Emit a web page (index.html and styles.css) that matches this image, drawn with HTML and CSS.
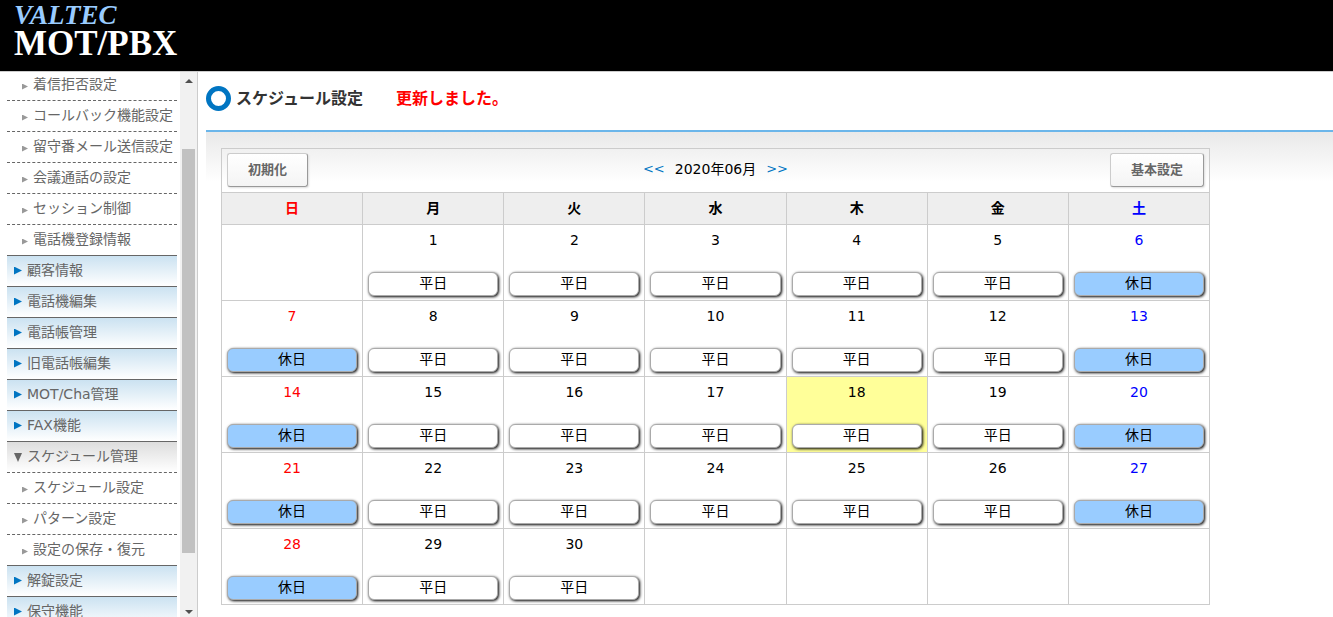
FILE: index.html
```html
<!DOCTYPE html>
<html lang="ja">
<head>
<meta charset="utf-8">
<title>MOT/PBX スケジュール設定</title>
<link rel="stylesheet" href="styles.css">
</head>
<body>
<header class="header">
  <div class="brand">VALTEC</div>
  <div class="product">MOT/PBX</div>
</header>
<div class="body">
  <aside class="sidebar">
    <nav class="nav">
      <ul class="menu">
        <li class="sub"><a href="#">着信拒否設定</a></li>
        <li class="sub"><a href="#">コールバック機能設定</a></li>
        <li class="sub"><a href="#">留守番メール送信設定</a></li>
        <li class="sub"><a href="#">会議通話の設定</a></li>
        <li class="sub"><a href="#">セッション制御</a></li>
        <li class="sub"><a href="#">電話機登録情報</a></li>
        <li class="top"><a href="#">顧客情報</a></li>
        <li class="top"><a href="#">電話機編集</a></li>
        <li class="top"><a href="#">電話帳管理</a></li>
        <li class="top"><a href="#">旧電話帳編集</a></li>
        <li class="top"><a href="#">MOT/Cha管理</a></li>
        <li class="top"><a href="#">FAX機能</a></li>
        <li class="top open"><a href="#">スケジュール管理</a></li>
        <li class="sub"><a href="#">スケジュール設定</a></li>
        <li class="sub"><a href="#">パターン設定</a></li>
        <li class="sub"><a href="#">設定の保存・復元</a></li>
        <li class="top"><a href="#">解錠設定</a></li>
        <li class="top"><a href="#">保守機能</a></li>
      </ul>
    </nav>
    <div class="scrollbar" aria-hidden="true">
      <svg class="scroll-arrow" viewBox="0 0 17 17"><path d="M5 11h8L9 7z"/></svg>
      <div class="scroll-track"><div class="scroll-thumb"></div></div>
      <svg class="scroll-arrow" viewBox="0 0 17 17"><path d="M5 10h8l-4 4z"/></svg>
    </div>
  </aside>
  <main class="main">
    <div class="heading">
      <span class="ring"></span>
      <h1>スケジュール設定</h1>
      <p class="message">更新しました。</p>
    </div>
    <div class="panel">
      <table class="calendar">
        <thead>
          <tr>
            <td class="toolbar-cell" colspan="7">
              <div class="toolbar">
                <button type="button" class="tool">初期化</button>
                <div class="month"><a href="#">&lt;&lt;</a><span>2020年06月</span><a href="#">&gt;&gt;</a></div>
                <button type="button" class="tool end">基本設定</button>
              </div>
            </td>
          </tr>
          <tr><th class="sun">日</th><th>月</th><th>火</th><th>水</th><th>木</th><th>金</th><th class="sat">土</th></tr>
        </thead>
        <tbody>
          <tr>
            <td></td>
            <td><div class="date">1</div><button type="button" class="day">平日</button></td>
            <td><div class="date">2</div><button type="button" class="day">平日</button></td>
            <td><div class="date">3</div><button type="button" class="day">平日</button></td>
            <td><div class="date">4</div><button type="button" class="day">平日</button></td>
            <td><div class="date">5</div><button type="button" class="day">平日</button></td>
            <td class="sat"><div class="date">6</div><button type="button" class="day off">休日</button></td>
          </tr>
          <tr>
            <td class="sun"><div class="date">7</div><button type="button" class="day off">休日</button></td>
            <td><div class="date">8</div><button type="button" class="day">平日</button></td>
            <td><div class="date">9</div><button type="button" class="day">平日</button></td>
            <td><div class="date">10</div><button type="button" class="day">平日</button></td>
            <td><div class="date">11</div><button type="button" class="day">平日</button></td>
            <td><div class="date">12</div><button type="button" class="day">平日</button></td>
            <td class="sat"><div class="date">13</div><button type="button" class="day off">休日</button></td>
          </tr>
          <tr>
            <td class="sun"><div class="date">14</div><button type="button" class="day off">休日</button></td>
            <td><div class="date">15</div><button type="button" class="day">平日</button></td>
            <td><div class="date">16</div><button type="button" class="day">平日</button></td>
            <td><div class="date">17</div><button type="button" class="day">平日</button></td>
            <td class="today"><div class="date">18</div><button type="button" class="day">平日</button></td>
            <td><div class="date">19</div><button type="button" class="day">平日</button></td>
            <td class="sat"><div class="date">20</div><button type="button" class="day off">休日</button></td>
          </tr>
          <tr>
            <td class="sun"><div class="date">21</div><button type="button" class="day off">休日</button></td>
            <td><div class="date">22</div><button type="button" class="day">平日</button></td>
            <td><div class="date">23</div><button type="button" class="day">平日</button></td>
            <td><div class="date">24</div><button type="button" class="day">平日</button></td>
            <td><div class="date">25</div><button type="button" class="day">平日</button></td>
            <td><div class="date">26</div><button type="button" class="day">平日</button></td>
            <td class="sat"><div class="date">27</div><button type="button" class="day off">休日</button></td>
          </tr>
          <tr>
            <td class="sun"><div class="date">28</div><button type="button" class="day off">休日</button></td>
            <td><div class="date">29</div><button type="button" class="day">平日</button></td>
            <td><div class="date">30</div><button type="button" class="day">平日</button></td>
            <td></td>
            <td></td>
            <td></td>
            <td></td>
          </tr>
        </tbody>
      </table>
    </div>
  </main>
</div>
</body>
</html>
```

FILE: styles.css
```css
* { box-sizing: border-box; }

body {
  margin: 0;
  height: 100vh;
  display: flex;
  flex-direction: column;
  overflow: hidden;
  background: #fff;
  color: #000;
  font: 14px/20px "DejaVu Sans", "Noto Sans CJK JP", sans-serif;
}

button { font-family: inherit; cursor: pointer; }
a { text-decoration: none; }

.header {
  flex: none;
  padding: 3px 14px 11px;
  background: #000;
  border-bottom: 1px solid #ccc;
  font-family: "Liberation Serif", serif;
  font-weight: bold;
}
.brand {
  color: #9cf;
  font-size: 27px;
  line-height: 25px;
  font-style: italic;
}
.product {
  color: #fff;
  font-size: 35px;
  line-height: 32px;
}

.body {
  flex: 1;
  min-height: 0;
  display: flex;
}

.sidebar {
  flex: none;
  width: 198px;
  display: flex;
  border-right: 1px solid #ccc;
  overflow: hidden;
}
.nav {
  flex: 1;
  padding: 0 3px 0 7px;
  overflow: hidden;
}
.menu {
  margin: -3px 0 0;
  padding: 0;
  list-style: none;
}
.menu a {
  display: flex;
  align-items: center;
  height: 30px;
  padding-bottom: 2px;
  color: #666;
  white-space: nowrap;
}
.menu a::before {
  content: "";
  flex: none;
  background: #0075c2;
  clip-path: polygon(0 0, 100% 50%, 0 100%);
}
.sub { border-top: 1px dashed #666; }
.sub a { padding-left: 15px; gap: 5px; }
.sub a::before { width: 6px; height: 6px; margin-top: 5px; background: #999; }
.top {
  border-top: 1px solid #666;
  background: linear-gradient(#cbe2f1, #fff);
}
.top a { padding-left: 7px; gap: 5px; }
.top a::before { width: 8px; height: 8px; margin-top: 1px; }
.open { background: linear-gradient(#ddd, #fff); }
.open a::before {
  background: #666;
  height: 9px;
  margin-top: 3px;
  clip-path: polygon(0 0, 100% 0, 50% 100%);
}

.scrollbar {
  flex: none;
  width: 17px;
  display: flex;
  flex-direction: column;
  background: #f1f1f1;
}
.scroll-arrow { width: 17px; height: 17px; fill: #505050; }
.scroll-track {
  flex: 1;
  display: flex;
  flex-direction: column;
  justify-content: flex-end;
  padding: 0 2px 47px;
}
.scroll-thumb { height: 87%; background: #c1c1c1; }

.main {
  flex: 1;
  min-width: 0;
  padding-left: 8px;
}
.heading {
  display: flex;
  align-items: center;
  height: 58px;
  padding-bottom: 5px;
  font-size: 16px;
}
.ring {
  width: 25px;
  height: 25px;
  margin-right: 5px;
  border: 5px solid #0075c2;
  border-radius: 50%;
}
.heading h1 {
  margin: 0 33px 0 0;
  font-size: 16px;
  color: #333;
}
.message { margin: 0; font-weight: bold; color: #f00; }

.panel {
  padding: 16px 15px;
  border-top: 2px solid #6bb6ea;
  background: linear-gradient(#e9e9e9, #fff 50px);
}
.calendar {
  width: 100%;
  max-width: 989px;
  table-layout: fixed;
  border-collapse: collapse;
  text-align: center;
}
.calendar th, .calendar td {
  border: 1px solid #ccc;
}
.calendar th {
  height: 32px;
  padding: 0 0 2px;
  background: #eee;
}
.calendar tbody td {
  height: 76px;
  padding: 5px 5px 4px;
  background: #fff;
  vertical-align: top;
}
.calendar tbody .today { background: #ff9; }
.sun { color: #f00; }
.sat { color: #00f; }
.date { margin-bottom: 22px; }

.calendar .toolbar-cell { height: 44px; padding: 4px 5px 5px; }
.toolbar {
  display: grid;
  grid-template-columns: 1fr auto 1fr;
  align-items: center;
}
.month { display: flex; gap: 10px; padding-bottom: 2px; }
.month a { color: #0075c2; font-size: 13px; }
.tool {
  justify-self: start;
  height: 34px;
  padding: 0 20px 4px;
  border: 1px solid;
  border-color: #ccc #999 #999 #ccc;
  border-radius: 3px;
  background: linear-gradient(#fff, #f4f4f4);
  box-shadow: 1px 1px 2px #ddd;
  color: #666;
  font-size: 13px;
  font-weight: bold;
}
.end { justify-self: end; }

.day {
  display: block;
  width: 100%;
  height: 24px;
  padding: 0 0 2px;
  border: 1px solid #aaa;
  border-radius: 6px;
  background: #fff;
  box-shadow: 1px 1px 3px #000;
  color: #000;
  font-size: 14px;
  line-height: 20px;
}
.off { background: #9cf; }
```
